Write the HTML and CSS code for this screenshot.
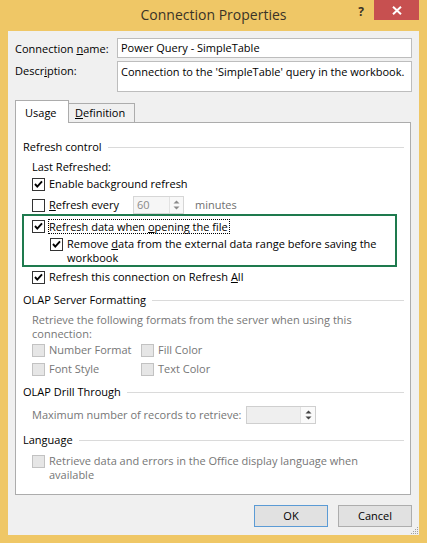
FILE: index.html
```html
<!DOCTYPE html>
<html>
<head>
<meta charset="utf-8">
<link rel="stylesheet" href="styles.css">
</head>
<body>
<div class="window">
  <div class="titlebar">
    <div></div>
    <div class="title">Connection Properties</div>
    <div class="controls">
      <span class="help">?</span>
      <span class="close"><svg width="10" height="9" viewBox="0 0 10 9"><path d="M1 0.8 L9 8.2 M9 0.8 L1 8.2" stroke="#fff" stroke-width="2" fill="none"/></svg></span>
    </div>
  </div>
  <div class="client">
    <div class="field-row">
      <span class="field-label">Connection <u>n</u>ame:</span>
      <div class="textbox">Power Query - SimpleTable</div>
    </div>
    <div class="field-row desc">
      <span class="field-label">Descr<u>i</u>ption:</span>
      <div class="textbox textarea">Connection to the 'SimpleTable' query in the workbook.</div>
    </div>
    <div class="tabs">
      <div class="tab active">Usa<u>g</u>e</div>
      <div class="tab"><u>D</u>efinition</div>
    </div>
    <div class="panel">
      <div class="row group-title">Refresh control</div>
      <div class="row indent r-last">Last Refreshed:</div>
      <div class="row indent r-enable">
        <span class="cb"><svg viewBox="0 0 11 11"><path d="M2 5 L4.3 7.6 L9 2.4"/></svg></span>
        <span>Enable back<u>g</u>round refresh</span>
      </div>
      <div class="row indent r-every">
        <span class="cb"></span>
        <span class="every-label"><u>R</u>efresh every</span>
        <div class="spin spin-small">
          <div class="spin-value">60</div>
          <div class="spin-btns">
            <svg viewBox="0 0 7 4"><path d="M0.5 3.5 L3.5 0.5 L6.5 3.5 Z"/></svg>
            <svg viewBox="0 0 7 4"><path d="M0.5 0.5 L3.5 3.5 L6.5 0.5 Z"/></svg>
          </div>
        </div>
        <span class="minutes">minutes</span>
      </div>
      <div class="highlight">
        <div class="row">
          <span class="cb cb-focus"><svg viewBox="0 0 11 11"><path d="M2 5 L4.3 7.6 L9 2.4"/></svg></span>
          <span class="focus">Refresh data when <u>o</u>pening the file</span>
        </div>
        <div class="multi r-remove">
          <span class="cb"><svg viewBox="0 0 11 11"><path d="M2 5 L4.3 7.6 L9 2.4"/></svg></span>
          <span>Remove <u>d</u>ata from the external data range before saving the<br>workbook</span>
        </div>
      </div>
      <div class="row indent r-all">
        <span class="cb"><svg viewBox="0 0 11 11"><path d="M2 5 L4.3 7.6 L9 2.4"/></svg></span>
        <span>Refresh this connection on Refresh <u>A</u>ll</span>
      </div>
      <div class="row group-title r-olap">OLAP Server Formatting</div>
      <div class="indent disabled r-retrieve">Retrieve the following formats from the server when using this<br>connection:</div>
      <div class="row indent disabled r-fmt1">
        <span class="cell"><span class="cb off"></span>Number Format</span>
        <span class="cell"><span class="cb off"></span>Fill Color</span>
      </div>
      <div class="row indent disabled r-fmt2">
        <span class="cell"><span class="cb off"></span>Font Style</span>
        <span class="cell"><span class="cb off"></span>Text Color</span>
      </div>
      <div class="row group-title r-drill">OLAP Drill Through</div>
      <div class="row indent disabled r-max">
        <span class="max-label">Maximum number of records to retrieve:</span>
        <div class="spin spin-wide">
          <div class="spin-value"></div>
          <div class="spin-btns">
            <svg viewBox="0 0 7 4"><path d="M0.5 3.5 L3.5 0.5 L6.5 3.5 Z"/></svg>
            <svg viewBox="0 0 7 4"><path d="M0.5 0.5 L3.5 3.5 L6.5 0.5 Z"/></svg>
          </div>
        </div>
      </div>
      <div class="row group-title r-lang">Language</div>
      <div class="multi indent disabled r-langopt">
        <span class="cb off"></span>
        <span>Retrieve data and errors in the Office display language when<br>available</span>
      </div>
    </div>
    <div class="buttons">
      <div class="btn default">OK</div>
      <div class="btn">Cancel</div>
    </div>
    <svg class="grip" width="8" height="8" viewBox="0 0 8 8">
      <rect x="6" y="0" width="1" height="1"/><rect x="4" y="2" width="1" height="1"/><rect x="6" y="2" width="1" height="1"/>
      <rect x="2" y="4" width="1" height="1"/><rect x="4" y="4" width="1" height="1"/><rect x="6" y="4" width="1" height="1"/>
      <rect x="0" y="6" width="1" height="1"/><rect x="2" y="6" width="1" height="1"/><rect x="4" y="6" width="1" height="1"/><rect x="6" y="6" width="1" height="1"/>
    </svg>
  </div>
</div>
</body>
</html>
```

FILE: styles.css
```css
* { box-sizing: border-box; }
body {
  margin: 0;
  font-family: "Open Sans", "Noto Sans", sans-serif;
  font-size: 11px;
  color: #000;
}
u { text-underline-offset: 1px; }
.window {
  width: 427px;
  height: 543px;
  background: #efc766;
  padding: 0 8px 8px;
  display: flex;
  flex-direction: column;
}
.titlebar {
  height: 31px;
  display: grid;
  grid-template-columns: 1fr auto 1fr;
}
.title {
  font-size: 14px;
  line-height: 30px;
  color: #3a3327;
}
.controls {
  justify-self: end;
  display: flex;
  align-items: flex-start;
}
.help {
  width: 26px;
  height: 22px;
  font-weight: bold;
  font-size: 12px;
  line-height: 24px;
  text-align: center;
  color: #3a3327;
}
.close {
  width: 45px;
  height: 20px;
  background: #c75050;
  display: flex;
  align-items: center;
  justify-content: center;
}
.client {
  flex: 1;
  background: #f0f0f0;
  padding: 7px 7px 8px;
  display: flex;
  flex-direction: column;
  position: relative;
}
.field-row { display: flex; align-items: center; }
.field-label { width: 102px; flex: none; }
.textbox {
  flex: 1;
  height: 20px;
  border: 1px solid #bdbdbd;
  background: #fff;
  padding: 0 3px;
  line-height: 18px;
}
.desc { margin-top: 3px; align-items: flex-start; }
.desc .field-label { padding-top: 2px; line-height: 15px; }
.textarea { height: 31px; padding-top: 2px; line-height: 15px; }

.tabs {
  display: flex;
  align-items: flex-end;
  height: 23px;
  margin-top: 8px;
  margin-bottom: -1px;
  position: relative;
  z-index: 1;
}
.tab {
  height: 19px;
  margin-bottom: 1px;
  width: 66px;
  border: 1px solid #acacac;
  border-left: none;
  border-bottom: none;
  background: #f0f0f0;
  padding-left: 6px;
  line-height: 18px;
}
.tab.active {
  height: 23px;
  width: 54px;
  margin-bottom: 0;
  border-left: 1px solid #acacac;
  background: #fff;
  padding-left: 9px;
  padding-top: 2px;
  line-height: 20px;
}
.panel {
  height: 373px;
  margin-right: 1px;
  border: 1px solid #acacac;
  background: #fff;
  padding: 16px 7px 0;
}
.row {
  display: flex;
  align-items: center;
  height: 16px;
  line-height: 16px;
  white-space: nowrap;
}
.indent { padding-left: 9px; }
.group-title::after {
  content: "";
  flex: 1;
  height: 1px;
  background: #dadada;
  margin-left: 6px;
  margin-right: -1px;
}
.r-last { margin-top: 4px; }
.r-enable { margin-top: 1px; }
.r-every { margin-top: 4px; height: 18px; }
.r-all { margin-top: 2px; }
.r-olap { margin-top: 7px; }
.r-retrieve { margin-top: 5px; line-height: 14px; }
.r-fmt1 { margin-top: 1px; }
.r-fmt2 { margin-top: 3px; }
.r-drill { margin-top: 7px; }
.r-max { margin-top: 6px; height: 18px; }
.r-lang { margin-top: 8px; }
.r-langopt { margin-top: 6px; }

.cb {
  width: 13px;
  height: 13px;
  flex: none;
  border: 1px solid #333;
  background: #fff;
  margin-right: 4px;
  display: inline-flex;
}
.cb svg {
  width: 11px;
  height: 11px;
  fill: none;
  stroke: #000;
  stroke-width: 1.9;
}
.cb.off {
  background: #e6e6e6;
  border-color: #c2c2c2;
}
.cb-focus { margin-right: 3px; }
.focus {
  border: 1px dotted #000;
  line-height: 13px;
  padding-right: 1px;
}
.disabled { color: #767676; }
.cell { display: flex; align-items: center; width: 109px; }

.every-label { width: 84px; }
.minutes { margin-left: 11px; color: #6f6f6f; }
.spin {
  display: flex;
  height: 18px;
  border: 1px solid #d6d6d6;
}
.spin-small { width: 51px; }
.spin-wide { width: 70px; border-color: #cfcfcf; }
.spin-value {
  flex: 1;
  background: #f6f6f6;
  color: #8a8a8a;
  padding-left: 3px;
  line-height: 16px;
}
.spin-wide .spin-value { background: #efefef; }
.spin-btns {
  width: 14px;
  border-left: 1px solid #e2e2e2;
  background: #f8f8f8;
  display: flex;
  flex-direction: column;
  align-items: center;
  justify-content: space-around;
  padding: 2px 0;
}
.spin-wide .spin-btns { width: 15px; background: #fafafa; }
.spin-btns svg { width: 7px; height: 4px; fill: #8a8a8a; }
.spin-wide .spin-btns svg { fill: #444; }
.max-label { width: 214px; }

.highlight {
  margin-left: -1px;
  width: 375px;
  height: 53px;
  border: 2px solid #1e7a4e;
  padding: 2px 0 0 8px;
}
.multi {
  display: flex;
  align-items: flex-start;
  line-height: 14px;
  white-space: nowrap;
}
.multi .cb { margin-top: 1px; }
.r-remove { margin-top: 3px; padding-left: 18px; }

.buttons {
  display: flex;
  justify-content: flex-end;
  gap: 10px;
  margin-top: 10px;
}
.btn {
  width: 74px;
  height: 22px;
  border: 1px solid #adadad;
  background: #e1e1e1;
  text-align: center;
  line-height: 20px;
}
.btn.default { border-color: #5b9bd5; }
.grip {
  position: absolute;
  right: 0;
  bottom: 0;
  fill: #a0a0a0;
}
```
